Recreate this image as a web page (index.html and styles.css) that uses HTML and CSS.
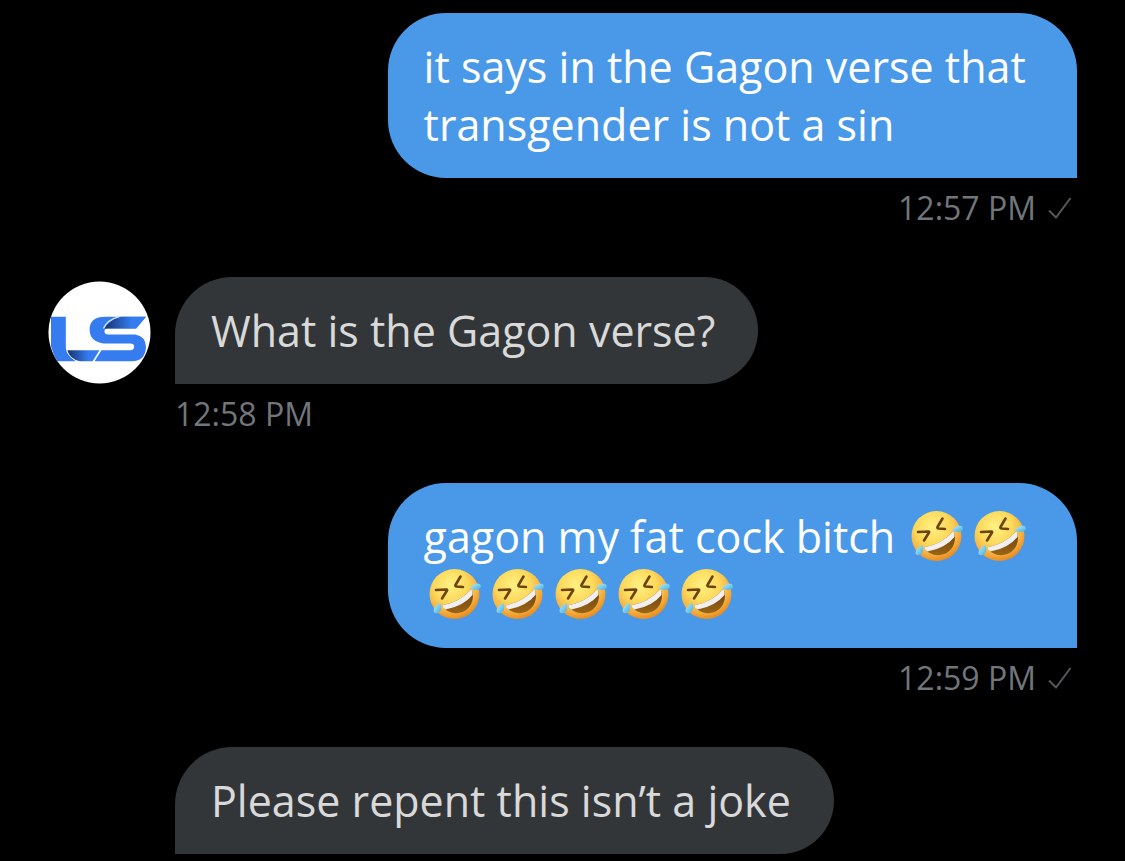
FILE: index.html
```
<!DOCTYPE html>
<html lang="en">
<head>
    <meta charset="UTF-8">
    <meta name="viewport" content="width=device-width, initial-scale=1.0">
    <title>Messages</title>
    <link rel="stylesheet" href="styles.css">
</head>
<body>
    <!-- Shared icons -->
    <svg class="sprite" aria-hidden="true">
        <defs>
            <radialGradient id="face" cx="42%" cy="32%" r="68%">
                <stop offset="0" stop-color="#fff184"/>
                <stop offset="0.5" stop-color="#fcd95a"/>
                <stop offset="0.8" stop-color="#f5b041"/>
                <stop offset="1" stop-color="#e88d22"/>
            </radialGradient>
            <linearGradient id="mouth" x1="0" y1="0" x2="0" y2="1">
                <stop offset="0" stop-color="#6b3f0c"/>
                <stop offset="1" stop-color="#9a6516"/>
            </linearGradient>
            <linearGradient id="tear" x1="0" y1="0" x2="1" y2="1">
                <stop offset="0" stop-color="#b9edfa"/>
                <stop offset="1" stop-color="#43aee0"/>
            </linearGradient>
        </defs>
        <symbol id="rofl" viewBox="0 0 52 52">
            <circle cx="25.5" cy="26" r="25" fill="url(#face)"/>
            <path d="M7 22L17.5 21.5Q18.500 21.500 18 22.500L13 30.500" fill="none" stroke="#6f430d" stroke-width="2.6" stroke-linecap="round" stroke-linejoin="round"/>
            <path d="M31.5 8.500L26.500 17Q26 18.500 27.500 18.500L34 19" fill="none" stroke="#6f430d" stroke-width="2.6" stroke-linecap="round" stroke-linejoin="round"/>
            <path d="M13 37.500Q31 34 42.500 21C46 29 43 39 35.500 43C28 47 18 45.500 13 37.500Z" fill="url(#mouth)"/>
            <path d="M13 37.500Q31 34 42.500 21Q44 24 43.500 27Q34 38.500 16.500 41.500Q14 40 13 37.500Z" fill="#f1efef"/>
            <path d="M11.5 35C7 37 4.500 40 4.500 43C5 46 9.500 46 11.500 42.500C12.500 40.500 12.500 37.500 11.500 35Z" fill="url(#tear)"/>
            <path d="M41 20C43 16.500 47.500 15 50.500 16C52.500 17.500 52.500 20.500 49.500 21.500C46.500 22.500 43 21.500 41 20Z" fill="url(#tear)"/>
        </symbol>
        <symbol id="check" viewBox="0 0 24 24">
            <path d="M1 14.500L8 21.500L22.500 2" fill="none" stroke="currentColor" stroke-width="2"/>
        </symbol>
    </svg>

    <main class="chat">
        <div class="message sent">
            <p class="bubble">it says in the Gagon verse that transgender is not a sin</p>
            <div class="meta">
                <time>12:57 PM</time>
                <svg class="check" role="img" aria-label="Sent"><use href="#check"/></svg>
            </div>
        </div>

        <div class="message received">
            <div class="row">
                <svg class="avatar" viewBox="0 0 104 104" role="img" aria-label="LS">
                    <defs>
                        <clipPath id="round"><circle cx="52" cy="52" r="51.5"/></clipPath>
                        <linearGradient id="fold-l" x1="0" y1="0" x2="1" y2="0">
                            <stop offset="0" stop-color="#17316f"/>
                            <stop offset="0.65" stop-color="#347cf0"/>
                        </linearGradient>
                    </defs>
                    <circle cx="52" cy="52" r="51.5" fill="#fff"/>
                    <g clip-path="url(#round)">
                        <path d="M3 36H18V68Q19 76 28 81H8L3 66Z" fill="#347cf0"/>
                        <path d="M19.5 70H52L45 81H32Q22 79 19.500 70Z" fill="url(#fold-l)"/>
                        <path d="M54 70H83Q87 70 87 66.500Q87 63 83 63H56Q42 61 42 49Q42 36 58 36H99L89 48H60Q57 48 57 51Q57 54 61 54H88Q99 56 99 67Q98 81 85 81H47Z" fill="#347cf0"/>
                        <path d="M57 48Q62 39 74 36H99L89 48Z" fill="url(#fold-l)"/>
                        <path d="M56 48Q60 39 72 36" fill="none" stroke="#d7e7ff" stroke-width="1.5"/>
                    </g>
                </svg>
                <p class="bubble">What is the Gagon verse?</p>
            </div>
            <div class="meta">
                <time>12:58 PM</time>
            </div>
        </div>

        <div class="message sent">
            <p class="bubble">gagon my fat cock bitch <svg class="emoji"><use href="#rofl"/></svg><svg class="emoji"><use href="#rofl"/></svg> <svg class="emoji"><use href="#rofl"/></svg><svg class="emoji"><use href="#rofl"/></svg><svg class="emoji"><use href="#rofl"/></svg><svg class="emoji"><use href="#rofl"/></svg><svg class="emoji"><use href="#rofl"/></svg></p>
            <div class="meta">
                <time>12:59 PM</time>
                <svg class="check" role="img" aria-label="Sent"><use href="#check"/></svg>
            </div>
        </div>

        <div class="message received">
            <p class="bubble">Please repent this isn’t a joke</p>
        </div>
    </main>
</body>
</html>
```
FILE: styles.css
```
body {
    background-color: #000;
    color: #fff;
    font-family: "Open Sans", "Noto Sans", sans-serif;
    margin: 0;
}

.sprite {
    position: absolute;
    width: 0;
    height: 0;
}

.chat {
    display: flex;
    flex-direction: column;
    gap: 49px;
    padding: 13px 48px 7px;
}

.message {
    display: flex;
    flex-direction: column;
}

.sent {
    align-items: flex-end;
}

/* leaves room for the avatar column */
.received {
    align-items: flex-start;
    padding-left: 127px;
}

.row {
    display: flex;
    align-items: flex-end;
    gap: 24px;
    margin-left: -127px;
}

.bubble {
    margin: 0;
    padding: 25px 36px 24px;
    font-size: 43px;
    line-height: 58px;
}

.sent .bubble {
    box-sizing: border-box;
    width: 67%;
    background-color: #4a99e9;
    border-radius: 58px 58px 0 58px;
}

.received .bubble {
    padding-right: 43px;
    background-color: #333638;
    color: #d9d9d9;
    border-radius: 58px 54px 54px 0;
}

.meta {
    display: flex;
    align-items: center;
    gap: 12px;
    margin-top: 10px;
    color: #71767b;
    font-size: 32px;
    line-height: 40px;
}

.sent .meta {
    padding-right: 5px;
}

.check {
    width: 24px;
    height: 24px;
    color: #55585c;
}

.avatar {
    flex: none;
    width: 103px;
    height: 103px;
}

.emoji {
    width: 52px;
    height: 52px;
    margin: 0 6px 0 5px;
    vertical-align: -9px;
}
```
